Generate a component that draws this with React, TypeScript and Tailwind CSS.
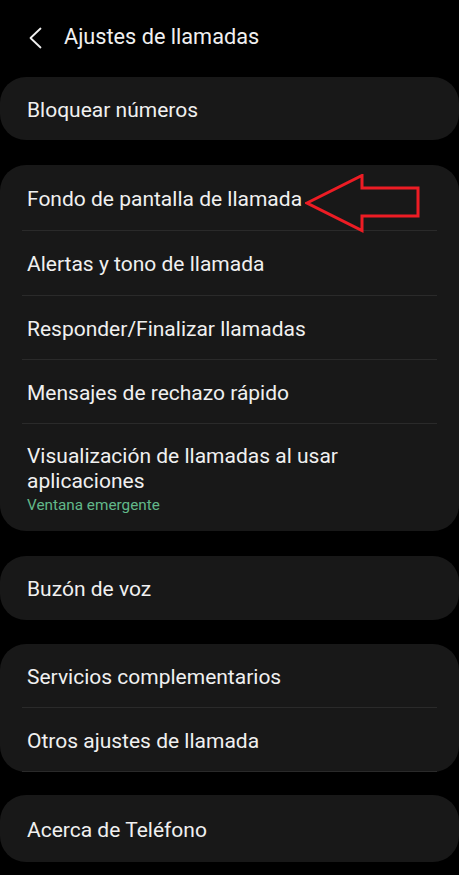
import { FC } from 'react';

const Row: FC<{ title: string; sub?: string; last?: boolean; h?: string }> = ({ title, sub, last, h = 'h-[64px]' }) => (
    <div className="px-[22px]">
        <div className={`flex flex-col justify-center ${sub ? 'pt-[20px] pb-[14px]' : `${h} pt-[3px]`} ${last ? '' : 'border-b border-[#2a2a2a]'}`}>
            <div className="pl-[5px] pr-[50px] text-[21px] leading-[25px] text-[#f0f0f0]">{title}</div>
            {sub && <div className="pl-[5px] text-[15.3px] leading-[23px] text-[#62b88a]">{sub}</div>}
        </div>
    </div>
);

const Card: FC<{ children: React.ReactNode; className?: string }> = ({ children, className = '' }) => (
    <div className={`bg-[#181818] rounded-[26px] ${className}`}>{children}</div>
);

export default function App() {
    return (
        <div className="w-[459px] h-[875px] bg-black overflow-hidden" style={{ fontFamily: 'Roboto, "Noto Sans", sans-serif' }}>
            <div className="flex items-center h-[77px] pl-[29px] pb-[2px]">
                <svg width="13" height="22" viewBox="0 0 13 22" fill="none" className="mr-[22px]">
                    <path d="M11.5 1.5 L1.5 11 L11.5 20.5" stroke="#f0f0f0" strokeWidth="1.8" strokeLinecap="round" strokeLinejoin="round" />
                </svg>
                <div className="text-[21.7px] text-[#f0f0f0]">Ajustes de llamadas</div>
            </div>
            <div className="flex flex-col">
                <Card>
                    <Row title="Bloquear números" last h="h-[63px]" />
                </Card>
                <Card className="relative mt-[25px]">
                    <Row title="Fondo de pantalla de llamada" h="h-[66px]" />
                    <Row title="Alertas y tono de llamada" h="h-[65px]" />
                    <Row title="Responder/Finalizar llamadas" />
                    <Row title="Mensajes de rechazo rápido" />
                    <Row title="Visualización de llamadas al usar aplicaciones" sub="Ventana emergente" last />
                    <svg className="absolute left-[305px] top-[9px]" width="116" height="60" viewBox="0 0 116 60" fill="none">
                        <path d="M2 29 L57 1.5 L57 14 L113 14 L113 42 L57 42 L57 56.5 Z" stroke="#ed1c24" strokeWidth="3" strokeLinejoin="miter" />
                    </svg>
                </Card>
                <Card className="mt-[25px]">
                    <Row title="Buzón de voz" last />
                </Card>
                <Card className="mt-[24px]">
                    <Row title="Servicios complementarios" />
                    <Row title="Otros ajustes de llamada" />
                </Card>
                <Card className="mt-[23px]">
                    <Row title="Acerca de Teléfono" last h="h-[67px]" />
                </Card>
            </div>
        </div>
    );
}
